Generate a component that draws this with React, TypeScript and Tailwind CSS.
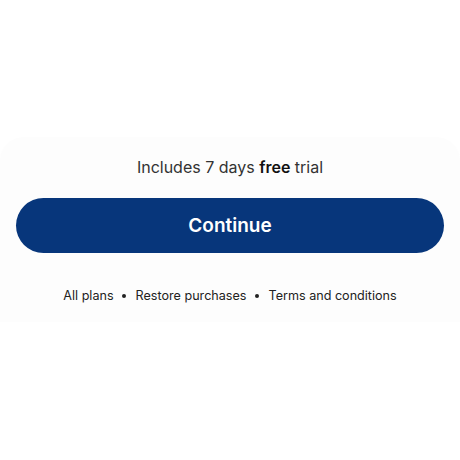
const links = ["All plans", "Restore purchases", "Terms and conditions"];

export default function App() {
  return (
    <div className="min-h-[460px] bg-white pt-[137px] font-['Inter',sans-serif]">
      <div className="rounded-t-[24px] bg-[#fdfdfd] px-4 pt-[18px] pb-[17px]">
        <p className="text-center text-[16px] leading-6 text-[#333333]">
          Includes 7 days <span className="font-semibold text-[#111111]">free</span> trial
        </p>
        <button className="mt-[19px] flex h-[55px] w-full items-center justify-center rounded-full bg-[#07367b] pt-[2px] text-[19px] font-semibold text-white">
          Continue
        </button>
        <div className="mt-[34px] flex items-center justify-center gap-2 text-[12.6px] leading-[18px] text-[#222222]">
          {links.map((link, i) => (
            <div key={link} className="flex items-center gap-2">
              {i > 0 && <span className="h-1 w-1 rounded-full bg-[#222222]" />}
              <span className={i > 0 ? "ml-[2px]" : ""}>{link}</span>
            </div>
          ))}
        </div>
      </div>
    </div>
  );
}
